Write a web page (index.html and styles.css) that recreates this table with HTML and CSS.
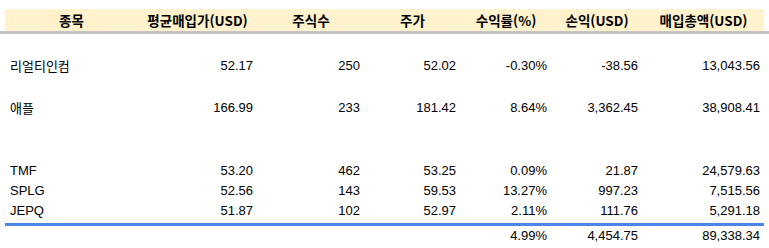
FILE: index.html
```html
<!DOCTYPE html>
<html lang="ko">
<head>
<meta charset="utf-8">
<link rel="stylesheet" href="styles.css">
</head>
<body>
<div class="sheet">
  <div class="row head">
    <div class="c">종목</div>
    <div class="c">평균매입가(USD)</div>
    <div class="c">주식수</div>
    <div class="c">주가</div>
    <div class="c">수익률(%)</div>
    <div class="c">손익(USD)</div>
    <div class="c">매입총액(USD)</div>
  </div>
  <div class="rule"></div>
  <div class="spacer-top"></div>
  <div class="row tall">
    <div class="l ko">리얼티인컴</div>
    <div class="r">52.17</div>
    <div class="r">250</div>
    <div class="r">52.02</div>
    <div class="r">-0.30%</div>
    <div class="r">-38.56</div>
    <div class="r">13,043.56</div>
  </div>
  <div class="row tall">
    <div class="l ko">애플</div>
    <div class="r">166.99</div>
    <div class="r">233</div>
    <div class="r">181.42</div>
    <div class="r">8.64%</div>
    <div class="r">3,362.45</div>
    <div class="r">38,908.41</div>
  </div>
  <div class="row blank"></div>
  <div class="row">
    <div class="l">TMF</div>
    <div class="r">53.20</div>
    <div class="r">462</div>
    <div class="r">53.25</div>
    <div class="r">0.09%</div>
    <div class="r">21.87</div>
    <div class="r">24,579.63</div>
  </div>
  <div class="row">
    <div class="l">SPLG</div>
    <div class="r">52.56</div>
    <div class="r">143</div>
    <div class="r">59.53</div>
    <div class="r">13.27%</div>
    <div class="r">997.23</div>
    <div class="r">7,515.56</div>
  </div>
  <div class="row last">
    <div class="l">JEPQ</div>
    <div class="r">51.87</div>
    <div class="r">102</div>
    <div class="r">52.97</div>
    <div class="r">2.11%</div>
    <div class="r">111.76</div>
    <div class="r">5,291.18</div>
  </div>
  <div class="row total">
    <div class="l"></div>
    <div class="r"></div>
    <div class="r"></div>
    <div class="r"></div>
    <div class="r">4.99%</div>
    <div class="r">4,454.75</div>
    <div class="r">89,338.34</div>
  </div>
</div>
</body>
</html>
```
FILE: styles.css
```css
html, body {
  margin: 0;
  padding: 0;
  background: #ffffff;
}
.sheet {
  padding-top: 9px;
  font-family: "Liberation Sans", "Noto Sans CJK KR", sans-serif;
  font-size: 13px;
  color: #000000;
}
.row {
  display: grid;
  grid-template-columns: 132px 120px 107px 96px 91px 91px 122px;
  margin: 0 5px;
  height: 20px;
  align-items: center;
  line-height: 20px;
}
.row > div {
  padding: 0 4px 0 5px;
  white-space: nowrap;
  overflow: hidden;
}
.head {
  height: 22px;
  background: #fff2cc;
  font-family: "Noto Sans CJK KR", sans-serif;
  font-weight: 700;
  font-size: 13.5px;
}
.c { text-align: center; }
.l { text-align: left; }
.r { text-align: right; }
.ko {
  font-family: "Noto Sans CJK KR", sans-serif;
}
.rule {
  height: 3px;
  background: #c4c4c4;
}
.spacer-top {
  height: 11px;
}
.tall {
  height: 42px;
}
.blank {
  height: 32px;
}
.last {
  height: 22px;
  border-bottom: 3px solid #4a86e8;
  align-items: start;
}
.total {
  height: 20px;
}
```
